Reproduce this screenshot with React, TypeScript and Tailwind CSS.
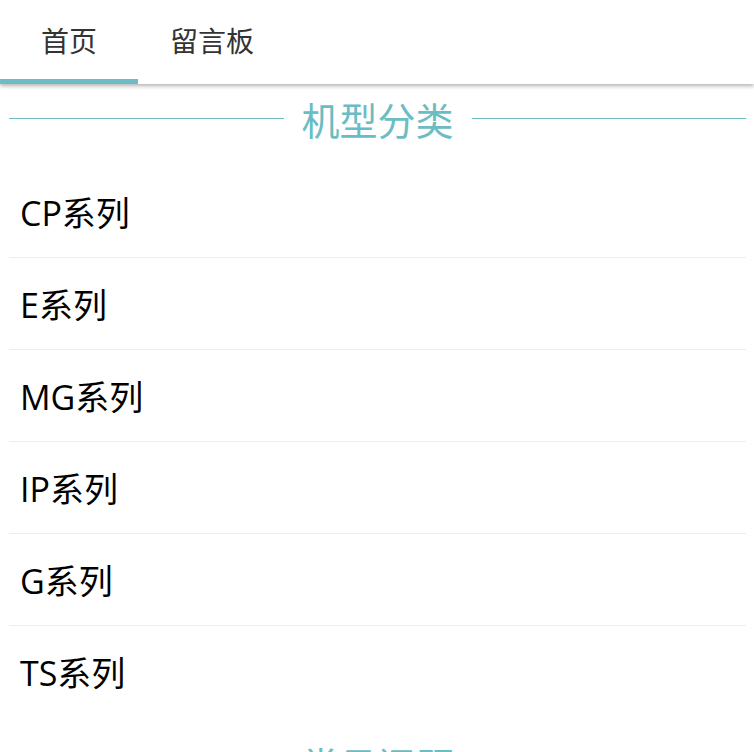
import React from "react";

const font = { fontFamily: '"Open Sans", "Noto Sans CJK SC", sans-serif' };

function Heading({ title }: { title: string }) {
  return (
    <div className="h-[68px] flex items-center">
      <div className="flex-1 h-px bg-[#6bbcc3]" />
      <div className="relative top-[2px] px-[18px] text-[38px] leading-none text-[#6bbcc3]" style={font}>
        {title}
      </div>
      <div className="flex-1 h-px bg-[#6bbcc3]" />
    </div>
  );
}

export default function App() {
  const rows = ["CP系列", "E系列", "MG系列", "IP系列", "G系列", "TS系列"];
  return (
    <div className="w-[754px] h-[752px] overflow-hidden bg-white" style={font}>
      <div className="relative z-10 h-[84px] bg-white shadow-[0_2px_4px_rgba(0,0,0,0.3)] flex items-stretch">
        <div className="relative w-[138px] flex items-center justify-center pb-[3px] text-[28px] text-[#333]">
          首页
          <div className="absolute left-0 right-0 bottom-0 h-[5px] bg-[#6bbcc3]" />
        </div>
        <div className="pl-[32px] flex items-center pb-[3px] text-[28px] text-[#333]">留言板</div>
      </div>
      <div className="mx-[9px] mr-[8px]">
        <Heading title="机型分类" />
        <div className="mt-[14px]">
          {rows.map((r, i) => (
            <div
              key={r}
              className={
                "h-[92px] flex items-center pl-[11px] pt-[3px] text-[34px] text-black border-b " +
                (i < rows.length - 1 ? "border-[#eeeeee]" : "border-transparent")
              }
            >
              {r}
            </div>
          ))}
        </div>
        <div className="mt-[11px]">
          <Heading title="常见问题" />
        </div>
      </div>
    </div>
  );
}
